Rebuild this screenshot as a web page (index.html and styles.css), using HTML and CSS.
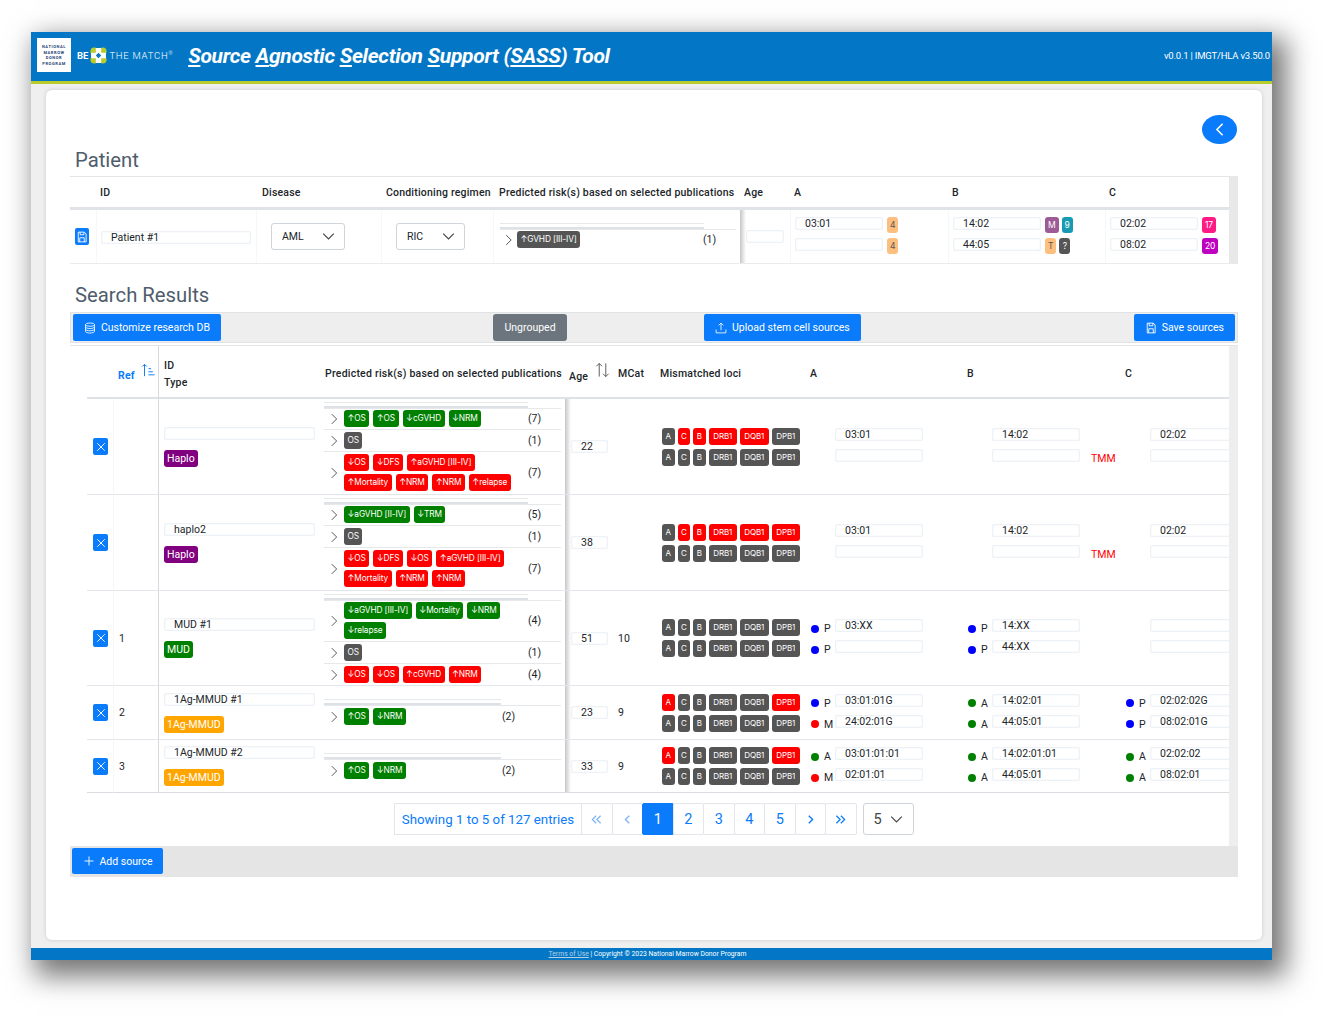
FILE: index.html
```html
<!DOCTYPE html>
<html lang="en">
<head>
    <meta charset="UTF-8">
    <title>Source Agnostic Selection Support (SASS) Tool</title>
    <link rel="stylesheet" href="styles.css">
</head>
<body>
    <svg class="icon-defs" width="0" height="0">
        <symbol id="i-chev" viewBox="0 0 16 16"><path d="M5 1.5 11.5 8 5 14.5" fill="none" stroke="currentColor" stroke-width="1.3"/></symbol>
        <symbol id="i-back" viewBox="0 0 16 16"><path d="M11 1.500 4.500 8l6.500 6.500" fill="none" stroke="currentColor" stroke-width="1.800"/></symbol>
        <symbol id="i-prev" viewBox="0 0 16 16"><path d="M10.500 2.500 5 8l5.500 5.500" fill="none" stroke="currentColor" stroke-width="2"/></symbol>
        <symbol id="i-next" viewBox="0 0 16 16"><path d="M5.500 2.500 11 8l-5.500 5.500" fill="none" stroke="currentColor" stroke-width="2"/></symbol>
        <symbol id="i-first" viewBox="0 0 16 16"><path d="M7.500 2.500 2 8l5.500 5.500M14 2.500 8.500 8l5.500 5.500" fill="none" stroke="currentColor" stroke-width="1.800"/></symbol>
        <symbol id="i-last" viewBox="0 0 16 16"><path d="M2 2.500 7.500 8 2 13.500M8.500 2.500 14 8l-5.500 5.500" fill="none" stroke="currentColor" stroke-width="1.800"/></symbol>
        <symbol id="i-down" viewBox="0 0 16 16"><path d="M1.5 4.5 8 11l6.500-6.500" fill="none" stroke="currentColor" stroke-width="1.4"/></symbol>
        <symbol id="i-x" viewBox="0 0 16 16"><path d="M3 3l10 10M13 3 3 13" fill="none" stroke="currentColor" stroke-width="1.2"/></symbol>
        <symbol id="i-save" viewBox="0 0 16 16"><path d="M3 1.500h8l2.500 2.500v10.500h-10.500zM5.500 1.500v3.500h5v-3.500M5 14.500v-5.500h6v5.500" fill="none" stroke="currentColor" stroke-width="1.200"/></symbol>
        <symbol id="i-db" viewBox="0 0 16 16"><g fill="none" stroke="currentColor" stroke-width="1.100"><ellipse cx="8" cy="3.500" rx="6" ry="2.200"/><path d="M2 3.500v9c0 1.200 2.700 2.200 6 2.200s6-1 6-2.200v-9M2 6.500c0 1.200 2.700 2.200 6 2.200s6-1 6-2.200M2 9.500c0 1.200 2.700 2.200 6 2.200s6-1 6-2.200"/></g></symbol>
        <symbol id="i-upload" viewBox="0 0 16 16"><path d="M8 11V1.500M4.800 4.500 8 1.500l3.200 3M1.500 10v4.500h13V10" fill="none" stroke="currentColor" stroke-width="1.100"/></symbol>
        <symbol id="i-plus" viewBox="0 0 16 16"><path d="M8 2v12M2 8h12" fill="none" stroke="currentColor" stroke-width="1.200"/></symbol>
    </svg>

    <div class="window">
        <header class="top-bar">
            <div class="nmdp-logo"><span>National</span><span>Marrow</span><span>Donor</span><span>Program</span></div>
            <div class="btm-logo">
                <b>BE</b>
                <svg class="btm-mark" viewBox="0 0 16 16">
                    <circle cx="4" cy="4" r="3.600" fill="#b9cc2e"/>
                    <circle cx="12" cy="4" r="3.600" fill="#b9cc2e"/>
                    <circle cx="4" cy="12" r="3.600" fill="#b9cc2e"/>
                    <circle cx="12" cy="12" r="3.600" fill="#b9cc2e"/>
                    <path d="M5.500 1h5v4.500h4.500v5h-4.500v4.500h-5v-4.500h-4.500v-5h4.500z" fill="#fff"/>
                    <path d="M8 5.500 10.500 8 8 10.500 5.500 8z" fill="#0377c6"/>
                </svg>
                <span>THE MATCH</span><sup>®</sup>
            </div>
            <h1 class="app-title"><u>S</u>ource <u>A</u>gnostic <u>S</u>election <u>S</u>upport (<u>SASS</u>) Tool</h1>
            <div class="version">v0.0.1 | IMGT/HLA v3.50.0</div>
        </header>

        <main class="page">
            <div class="card">
                <div class="back-row">
                    <button class="back-btn"><svg class="ic-back"><use href="#i-back"/></svg></button>
                </div>

                <h2 class="section-title patient-title">Patient</h2>
                <section class="patient-panel">
                    <table class="patient-table">
                        <colgroup>
                            <col class="pc-save"><col class="pc-id"><col class="pc-dis"><col class="pc-cond"><col class="pc-risk"><col class="pc-age"><col class="pc-a"><col class="pc-b"><col class="pc-c">
                        </colgroup>
                        <thead>
                            <tr>
                                <th></th>
                                <th>ID</th>
                                <th>Disease</th>
                                <th>Conditioning regimen</th>
                                <th>Predicted risk(s) based on selected publications</th>
                                <th>Age</th>
                                <th>A</th>
                                <th>B</th>
                                <th>C</th>
                            </tr>
                        </thead>
                        <tbody>
                            <tr>
                                <td><span class="save-btn"><svg class="ic-12"><use href="#i-save"/></svg></span></td>
                                <td class="td-patient-id"><div class="field field-id">Patient #1</div></td>
                                <td><div class="select select-aml">AML<svg class="ic-down"><use href="#i-down"/></svg></div></td>
                                <td><div class="select select-ric">RIC<svg class="ic-down"><use href="#i-down"/></svg></div></td>
                                <td class="risk risk-patient">
                                    <div class="risk-head"></div>
                                    <div class="risk-row">
                                        <svg class="ic-chev"><use href="#i-chev"/></svg>
                                        <div class="tags"><div class="tag-line"><span class="tag gray">↑GVHD [III-IV]</span></div></div>
                                        <span class="count">(1)</span>
                                    </div>
                                </td>
                                <td><div class="field field-age"></div></td>
                                <td class="td-typing">
                                    <div class="typing"><div class="field">03:01</div><span class="tag mini orange">4</span></div>
                                    <div class="typing"><div class="field"></div><span class="tag mini orange">4</span></div>
                                </td>
                                <td class="td-typing">
                                    <div class="typing"><div class="field">14:02</div><span class="tag mini purple">M</span><span class="tag mini teal">9</span></div>
                                    <div class="typing"><div class="field">44:05</div><span class="tag mini orange">T</span><span class="tag mini gray">?</span></div>
                                </td>
                                <td class="td-typing">
                                    <div class="typing"><div class="field">02:02</div><span class="tag mini pink">17</span></div>
                                    <div class="typing"><div class="field">08:02</div><span class="tag mini magenta">20</span></div>
                                </td>
                            </tr>
                        </tbody>
                    </table>
                </section>

                <h2 class="section-title results-title">Search Results</h2>
                <div class="toolbar">
                    <button class="btn"><svg class="ic-12"><use href="#i-db"/></svg>Customize research DB</button>
                    <button class="btn btn-muted btn-ungrouped">Ungrouped</button>
                    <button class="btn btn-upload"><svg class="ic-12"><use href="#i-upload"/></svg>Upload stem cell sources</button>
                    <button class="btn btn-save"><svg class="ic-12"><use href="#i-save"/></svg>Save sources</button>
                </div>

                <section class="results">
                    <div class="results-body">
                        <table class="results-table">
                            <colgroup>
                                <col class="c-del"><col class="c-ref"><col class="c-id"><col class="c-risk"><col class="c-age"><col class="c-mcat"><col class="c-loci"><col class="c-a"><col class="c-b"><col class="c-c">
                            </colgroup>
                            <thead>
                                <tr>
                                    <th></th>
                                    <th class="th-ref"><span class="ref-link">Ref</span>
                                        <svg class="ic-sort" viewBox="0 0 16 16"><path d="M4 15V1.500M1.500 4 4 1.500 6.500 4M8.500 6.500h3M8.500 10h5M8.500 13.500h7" fill="none" stroke="currentColor" stroke-width="1.100"/></svg>
                                    </th>
                                    <th class="th-id">ID<br>Type</th>
                                    <th class="th-risk">Predicted risk(s) based on selected publications</th>
                                    <th class="th-age"><span class="age-label">Age</span>
                                        <svg class="ic-updown" viewBox="0 0 16 16"><path d="M4.500 15V1M1.500 4l3-3 3 3M11.500 1v14M8.500 12l3 3 3-3" fill="none" stroke="currentColor" stroke-width="1"/></svg>
                                    </th>
                                    <th class="th-mcat">MCat</th>
                                    <th class="th-loci">Mismatched loci</th>
                                    <th class="th-al">A</th>
                                    <th class="th-al">B</th>
                                    <th class="th-al">C</th>
                                </tr>
                            </thead>
                            <tbody>
                                <tr class="row-96">
                                    <td class="td-del"><span class="del-btn"><svg class="ic-12"><use href="#i-x"/></svg></span></td>
                                    <td class="td-ref"></td>
                                    <td class="td-id"><div class="field field-name"></div><span class="tag type purple">Haplo</span></td>
                                    <td class="risk">
                                        <div class="risk-head"></div>
                                        <div class="risk-row">
                                            <svg class="ic-chev"><use href="#i-chev"/></svg>
                                            <div class="tags"><div class="tag-line"><span class="tag green">↑OS</span><span class="tag green">↑OS</span><span class="tag green">↓cGVHD</span><span class="tag green">↓NRM</span></div></div>
                                            <span class="count">(7)</span>
                                        </div>
                                        <div class="risk-row">
                                            <svg class="ic-chev"><use href="#i-chev"/></svg>
                                            <div class="tags"><div class="tag-line"><span class="tag gray">OS</span></div></div>
                                            <span class="count">(1)</span>
                                        </div>
                                        <div class="risk-row last">
                                            <svg class="ic-chev"><use href="#i-chev"/></svg>
                                            <div class="tags">
                                                <div class="tag-line"><span class="tag red">↓OS</span><span class="tag red">↓DFS</span><span class="tag red">↑aGVHD [III-IV]</span></div>
                                                <div class="tag-line"><span class="tag red">↑Mortality</span><span class="tag red">↑NRM</span><span class="tag red">↑NRM</span><span class="tag red">↑relapse</span></div>
                                            </div>
                                            <span class="count">(7)</span>
                                        </div>
                                    </td>
                                    <td class="td-age"><div class="field field-age">22</div></td>
                                    <td class="td-mcat"></td>
                                    <td class="td-loci">
                                        <div class="loci"><span class="tag locus gray">A</span><span class="tag locus red">C</span><span class="tag locus red">B</span><span class="tag locus wide red">DRB1</span><span class="tag locus wide red">DQB1</span><span class="tag locus wide gray">DPB1</span></div>
                                        <div class="loci"><span class="tag locus gray">A</span><span class="tag locus gray">C</span><span class="tag locus gray">B</span><span class="tag locus wide gray">DRB1</span><span class="tag locus wide gray">DQB1</span><span class="tag locus wide gray">DPB1</span></div>
                                    </td>
                                    <td class="td-al">
                                        <div class="allele"><span class="grade"></span><div class="field">03:01</div></div>
                                        <div class="allele"><span class="grade"></span><div class="field"></div></div>
                                    </td>
                                    <td class="td-al">
                                        <div class="allele"><span class="grade"></span><div class="field">14:02</div></div>
                                        <div class="allele"><span class="grade"></span><div class="field"></div><span class="tmm">TMM</span></div>
                                    </td>
                                    <td class="td-al">
                                        <div class="allele"><span class="grade"></span><div class="field">02:02</div></div>
                                        <div class="allele"><span class="grade"></span><div class="field"></div></div>
                                    </td>
                                </tr>

                                <tr class="row-96">
                                    <td class="td-del"><span class="del-btn"><svg class="ic-12"><use href="#i-x"/></svg></span></td>
                                    <td class="td-ref"></td>
                                    <td class="td-id"><div class="field field-name">haplo2</div><span class="tag type purple">Haplo</span></td>
                                    <td class="risk">
                                        <div class="risk-head"></div>
                                        <div class="risk-row">
                                            <svg class="ic-chev"><use href="#i-chev"/></svg>
                                            <div class="tags"><div class="tag-line"><span class="tag green">↓aGVHD [II-IV]</span><span class="tag green">↓TRM</span></div></div>
                                            <span class="count">(5)</span>
                                        </div>
                                        <div class="risk-row">
                                            <svg class="ic-chev"><use href="#i-chev"/></svg>
                                            <div class="tags"><div class="tag-line"><span class="tag gray">OS</span></div></div>
                                            <span class="count">(1)</span>
                                        </div>
                                        <div class="risk-row last">
                                            <svg class="ic-chev"><use href="#i-chev"/></svg>
                                            <div class="tags">
                                                <div class="tag-line"><span class="tag red">↓OS</span><span class="tag red">↓DFS</span><span class="tag red">↓OS</span><span class="tag red">↑aGVHD [III-IV]</span></div>
                                                <div class="tag-line"><span class="tag red">↑Mortality</span><span class="tag red">↑NRM</span><span class="tag red">↑NRM</span></div>
                                            </div>
                                            <span class="count">(7)</span>
                                        </div>
                                    </td>
                                    <td class="td-age"><div class="field field-age">38</div></td>
                                    <td class="td-mcat"></td>
                                    <td class="td-loci">
                                        <div class="loci"><span class="tag locus gray">A</span><span class="tag locus red">C</span><span class="tag locus red">B</span><span class="tag locus wide red">DRB1</span><span class="tag locus wide red">DQB1</span><span class="tag locus wide red">DPB1</span></div>
                                        <div class="loci"><span class="tag locus gray">A</span><span class="tag locus gray">C</span><span class="tag locus gray">B</span><span class="tag locus wide gray">DRB1</span><span class="tag locus wide gray">DQB1</span><span class="tag locus wide gray">DPB1</span></div>
                                    </td>
                                    <td class="td-al">
                                        <div class="allele"><span class="grade"></span><div class="field">03:01</div></div>
                                        <div class="allele"><span class="grade"></span><div class="field"></div></div>
                                    </td>
                                    <td class="td-al">
                                        <div class="allele"><span class="grade"></span><div class="field">14:02</div></div>
                                        <div class="allele"><span class="grade"></span><div class="field"></div><span class="tmm">TMM</span></div>
                                    </td>
                                    <td class="td-al">
                                        <div class="allele"><span class="grade"></span><div class="field">02:02</div></div>
                                        <div class="allele"><span class="grade"></span><div class="field"></div></div>
                                    </td>
                                </tr>

                                <tr class="row-95">
                                    <td class="td-del"><span class="del-btn"><svg class="ic-12"><use href="#i-x"/></svg></span></td>
                                    <td class="td-ref">1</td>
                                    <td class="td-id"><div class="field field-name">MUD #1</div><span class="tag type green">MUD</span></td>
                                    <td class="risk">
                                        <div class="risk-head"></div>
                                        <div class="risk-row">
                                            <svg class="ic-chev"><use href="#i-chev"/></svg>
                                            <div class="tags">
                                                <div class="tag-line"><span class="tag green">↓aGVHD [III-IV]</span><span class="tag green">↓Mortality</span><span class="tag green">↓NRM</span></div>
                                                <div class="tag-line"><span class="tag green">↓relapse</span></div>
                                            </div>
                                            <span class="count">(4)</span>
                                        </div>
                                        <div class="risk-row">
                                            <svg class="ic-chev"><use href="#i-chev"/></svg>
                                            <div class="tags"><div class="tag-line"><span class="tag gray">OS</span></div></div>
                                            <span class="count">(1)</span>
                                        </div>
                                        <div class="risk-row last">
                                            <svg class="ic-chev"><use href="#i-chev"/></svg>
                                            <div class="tags"><div class="tag-line"><span class="tag red">↓OS</span><span class="tag red">↓OS</span><span class="tag red">↑cGVHD</span><span class="tag red">↑NRM</span></div></div>
                                            <span class="count">(4)</span>
                                        </div>
                                    </td>
                                    <td class="td-age"><div class="field field-age">51</div></td>
                                    <td class="td-mcat">10</td>
                                    <td class="td-loci">
                                        <div class="loci"><span class="tag locus gray">A</span><span class="tag locus gray">C</span><span class="tag locus gray">B</span><span class="tag locus wide gray">DRB1</span><span class="tag locus wide gray">DQB1</span><span class="tag locus wide gray">DPB1</span></div>
                                        <div class="loci"><span class="tag locus gray">A</span><span class="tag locus gray">C</span><span class="tag locus gray">B</span><span class="tag locus wide gray">DRB1</span><span class="tag locus wide gray">DQB1</span><span class="tag locus wide gray">DPB1</span></div>
                                    </td>
                                    <td class="td-al">
                                        <div class="allele"><span class="grade"><i class="dot blue"></i>P</span><div class="field">03:XX</div></div>
                                        <div class="allele"><span class="grade"><i class="dot blue"></i>P</span><div class="field"></div></div>
                                    </td>
                                    <td class="td-al">
                                        <div class="allele"><span class="grade"><i class="dot blue"></i>P</span><div class="field">14:XX</div></div>
                                        <div class="allele"><span class="grade"><i class="dot blue"></i>P</span><div class="field">44:XX</div></div>
                                    </td>
                                    <td class="td-al">
                                        <div class="allele"><span class="grade"></span><div class="field"></div></div>
                                        <div class="allele"><span class="grade"></span><div class="field"></div></div>
                                    </td>
                                </tr>

                                <tr class="row-54">
                                    <td class="td-del"><span class="del-btn"><svg class="ic-12"><use href="#i-x"/></svg></span></td>
                                    <td class="td-ref">2</td>
                                    <td class="td-id"><div class="field field-name">1Ag-MMUD #1</div><span class="tag type orange-strong">1Ag-MMUD</span></td>
                                    <td class="risk risk-short">
                                        <div class="risk-head"></div>
                                        <div class="risk-row last">
                                            <svg class="ic-chev"><use href="#i-chev"/></svg>
                                            <div class="tags"><div class="tag-line"><span class="tag green">↑OS</span><span class="tag green">↓NRM</span></div></div>
                                            <span class="count">(2)</span>
                                        </div>
                                    </td>
                                    <td class="td-age"><div class="field field-age">23</div></td>
                                    <td class="td-mcat">9</td>
                                    <td class="td-loci">
                                        <div class="loci"><span class="tag locus red">A</span><span class="tag locus gray">C</span><span class="tag locus gray">B</span><span class="tag locus wide gray">DRB1</span><span class="tag locus wide gray">DQB1</span><span class="tag locus wide red">DPB1</span></div>
                                        <div class="loci"><span class="tag locus gray">A</span><span class="tag locus gray">C</span><span class="tag locus gray">B</span><span class="tag locus wide gray">DRB1</span><span class="tag locus wide gray">DQB1</span><span class="tag locus wide gray">DPB1</span></div>
                                    </td>
                                    <td class="td-al">
                                        <div class="allele"><span class="grade"><i class="dot blue"></i>P</span><div class="field">03:01:01G</div></div>
                                        <div class="allele"><span class="grade"><i class="dot red"></i>M</span><div class="field">24:02:01G</div></div>
                                    </td>
                                    <td class="td-al">
                                        <div class="allele"><span class="grade"><i class="dot green"></i>A</span><div class="field">14:02:01</div></div>
                                        <div class="allele"><span class="grade"><i class="dot green"></i>A</span><div class="field">44:05:01</div></div>
                                    </td>
                                    <td class="td-al">
                                        <div class="allele"><span class="grade"><i class="dot blue"></i>P</span><div class="field">02:02:02G</div></div>
                                        <div class="allele"><span class="grade"><i class="dot blue"></i>P</span><div class="field">08:02:01G</div></div>
                                    </td>
                                </tr>

                                <tr class="row-53">
                                    <td class="td-del"><span class="del-btn"><svg class="ic-12"><use href="#i-x"/></svg></span></td>
                                    <td class="td-ref">3</td>
                                    <td class="td-id"><div class="field field-name">1Ag-MMUD #2</div><span class="tag type orange-strong">1Ag-MMUD</span></td>
                                    <td class="risk risk-short">
                                        <div class="risk-head"></div>
                                        <div class="risk-row last">
                                            <svg class="ic-chev"><use href="#i-chev"/></svg>
                                            <div class="tags"><div class="tag-line"><span class="tag green">↑OS</span><span class="tag green">↓NRM</span></div></div>
                                            <span class="count">(2)</span>
                                        </div>
                                    </td>
                                    <td class="td-age"><div class="field field-age">33</div></td>
                                    <td class="td-mcat">9</td>
                                    <td class="td-loci">
                                        <div class="loci"><span class="tag locus red">A</span><span class="tag locus gray">C</span><span class="tag locus gray">B</span><span class="tag locus wide gray">DRB1</span><span class="tag locus wide gray">DQB1</span><span class="tag locus wide red">DPB1</span></div>
                                        <div class="loci"><span class="tag locus gray">A</span><span class="tag locus gray">C</span><span class="tag locus gray">B</span><span class="tag locus wide gray">DRB1</span><span class="tag locus wide gray">DQB1</span><span class="tag locus wide gray">DPB1</span></div>
                                    </td>
                                    <td class="td-al">
                                        <div class="allele"><span class="grade"><i class="dot green"></i>A</span><div class="field">03:01:01:01</div></div>
                                        <div class="allele"><span class="grade"><i class="dot red"></i>M</span><div class="field">02:01:01</div></div>
                                    </td>
                                    <td class="td-al">
                                        <div class="allele"><span class="grade"><i class="dot green"></i>A</span><div class="field">14:02:01:01</div></div>
                                        <div class="allele"><span class="grade"><i class="dot green"></i>A</span><div class="field">44:05:01</div></div>
                                    </td>
                                    <td class="td-al">
                                        <div class="allele"><span class="grade"><i class="dot green"></i>A</span><div class="field">02:02:02</div></div>
                                        <div class="allele"><span class="grade"><i class="dot green"></i>A</span><div class="field">08:02:01</div></div>
                                    </td>
                                </tr>
                            </tbody>
                        </table>

                        <div class="pager-row">
                            <div class="pager">
                                <span class="page-info">Showing 1 to 5 of 127 entries</span>
                                <a class="page-link faded"><svg class="ic-page"><use href="#i-first"/></svg></a>
                                <a class="page-link faded"><svg class="ic-page"><use href="#i-prev"/></svg></a>
                                <a class="page-link active">1</a>
                                <a class="page-link">2</a>
                                <a class="page-link">3</a>
                                <a class="page-link">4</a>
                                <a class="page-link">5</a>
                                <a class="page-link"><svg class="ic-page"><use href="#i-next"/></svg></a>
                                <a class="page-link"><svg class="ic-page"><use href="#i-last"/></svg></a>
                            </div>
                            <div class="page-size">5<svg class="ic-down"><use href="#i-down"/></svg></div>
                        </div>
                    </div>
                    <div class="results-foot">
                        <button class="btn btn-add"><svg class="ic-12"><use href="#i-plus"/></svg>Add source</button>
                    </div>
                </section>
            </div>
        </main>

        <footer class="bottom-bar"><a>Terms of Use</a> | Copyright © 2023 National Marrow Donor Program</footer>
    </div>
</body>
</html>
```

FILE: styles.css
```css
* {
    box-sizing: border-box;
}
body {
    margin: 0;
    height: 1022px;
    padding: 32px 0 0 31px;
    background-color: #fff;
    color: #212529;
    font-family: Roboto, "Liberation Sans", sans-serif;
    font-size: 10.5px;
    overflow: hidden;
}
.icon-defs {
    display: block;
    height: 0;
}
.window {
    width: 1241px;
    height: 928px;
    display: flex;
    flex-direction: column;
    box-shadow: 9px 11px 26px 5px rgba(0,0,0,0.55);
}

/* top bar */
.top-bar {
    height: 52px;
    flex: none;
    display: flex;
    align-items: center;
    padding: 0 2px 3px 6px;
    background-color: #0377c6;
    border-bottom: 3px solid #b9cc2e;
    color: #fff;
}
.nmdp-logo {
    width: 34px;
    height: 34px;
    background-color: #fff;
    color: #1c3f77;
    display: flex;
    flex-direction: column;
    align-items: center;
    justify-content: center;
    font-size: 4px;
    line-height: 5.5px;
    font-weight: 700;
    text-transform: uppercase;
    letter-spacing: 0.6px;
}
.btm-logo {
    display: flex;
    align-items: center;
    margin-left: 6px;
    font-size: 9.5px;
    letter-spacing: 0.75px;
    font-weight: 300;
}
.btm-logo b {
    font-weight: 700;
    letter-spacing: 0;
}
.btm-logo sup {
    font-size: 5px;
    margin-bottom: 5px;
}
.btm-mark {
    width: 17px;
    height: 17px;
    margin: 0 2px 0 2px;
}
.app-title {
    margin: 2px 0 0 15px;
    font-size: 21px;
    font-weight: 700;
    font-style: italic;
    letter-spacing: -0.3px;
    white-space: nowrap;
}
.version {
    margin-left: auto;
    font-size: 9.5px;
    letter-spacing: -0.2px;
}

/* page + card */
.page {
    flex: 1;
    min-height: 0;
    padding: 6px 10px 8px 15px;
    background-color: #efefef;
}
.card {
    height: 100%;
    padding: 25px 24px 0 24px;
    background-color: #fff;
    border-radius: 6px;
    box-shadow: 0 0 4px rgba(0,0,0,0.15);
}
.back-row {
    display: flex;
    justify-content: flex-end;
    padding-right: 1px;
}
.back-btn {
    width: 35px;
    height: 29px;
    padding: 0;
    border: none;
    border-radius: 50%;
    background-color: #0a7bfb;
    color: #fff;
    display: flex;
    align-items: center;
    justify-content: center;
}
.ic-back {
    width: 14px;
    height: 15px;
}
.section-title {
    margin: 0;
    padding-left: 5px;
    font-size: 20.3px;
    line-height: 24px;
    font-weight: 400;
    color: #4f5d6b;
}
.patient-title {
    margin-top: 4px;
    margin-bottom: 4px;
}
.results-title {
    margin-top: 19px;
    margin-bottom: 5px;
}
.card svg.ic-12 {
    width: 12px;
    height: 12px;
    flex: none;
}

/* shared cell bits */
.field {
    width: 88px;
    height: 13px;
    flex: none;
    padding-left: 10px;
    border-radius: 2px;
    background-color: #fff;
    box-shadow: inset 0 0 2px 1px #e8eef5;
    font-size: 10.500px;
    line-height: 13px;
    white-space: nowrap;
}
.tag {
    display: inline-block;
    height: 17px;
    padding: 0 3.5px;
    border-radius: 3px;
    color: #fff;
    font-family: Inter, Roboto, sans-serif;
    font-size: 8.300px;
    letter-spacing: -0.1px;
    line-height: 17px;
    white-space: nowrap;
}
.tag.green { background-color: #008000; }
.tag.red { background-color: #f00; }
.tag.gray { background-color: #555; }
.tag.purple { background-color: #800080; }
.tag.orange-strong { background-color: #ffa500; }
.tag.orange { background-color: #fdbf7f; color: #555; }
.tag.teal { background-color: #179ab3; }
.tag.pink { background-color: #ff1a86; }
.tag.magenta { background-color: #c000c0; }
.tag.mini {
    height: 16px;
    min-width: 11px;
    padding: 0 3px;
    line-height: 16px;
    text-align: center;
    font-size: 8.500px;
}
.tag.mini.purple {
    background-color: #9c5a96;
}
.risk {
    position: relative;
    vertical-align: top;
    padding: 0 4px 0 1px;
}
.risk::after {
    content: "";
    position: absolute;
    top: 0;
    bottom: 0;
    left: 100%;
    width: 6px;
    background: linear-gradient(to right, #c6c6c6, rgba(255,255,255,0));
}
.risk-head {
    width: 204px;
    height: 6px;
    margin-top: 3px;
    border-top: 1px solid #e6e9ec;
    border-bottom: 2px solid #dee2e6;
}
.risk-row {
    display: flex;
    align-items: center;
    padding: 2px 0;
    border-top: 1px solid #e6e9ec;
}
.risk-head + .risk-row {
    padding-top: 1px;
}
.risk-row .count {
    font-size: 10.500px;
}
.tags {
    width: 184px;
    flex: none;
    display: flex;
    flex-direction: column;
    gap: 3px;
}
.tag-line {
    display: flex;
    gap: 4px;
}
.ic-chev {
    width: 20px;
    height: 12px;
    flex: none;
    color: #555;
}
.ic-down {
    width: 13px;
    height: 13px;
    color: #444;
}

/* patient panel */
.patient-panel {
    border-top: 1px solid #e3e6e9;
    border-bottom: 1px solid #e9ecef;
    border-right: 9px solid #e8e8e8;
}
.patient-table, .results-table {
    border-collapse: separate;
    border-spacing: 0;
    table-layout: fixed;
}
.patient-table {
    width: 1159px;
}
.pc-save { width: 26px; }
.pc-id { width: 160px; }
.pc-dis { width: 125px; }
.pc-cond { width: 112px; }
.pc-risk { width: 247px; }
.pc-age { width: 50px; }
.pc-a { width: 158px; }
.pc-b { width: 157px; }
.pc-c { width: 124px; }
.patient-table th {
    height: 33px;
    padding: 0 0 0 4px;
    border-bottom: 3px solid #e0e4e8;
    text-align: left;
    font-weight: 500;
    letter-spacing: 0.2px;
    white-space: nowrap;
}
.patient-table th:nth-child(2) { padding-left: 4px; }
.patient-table th:nth-child(3) { padding-left: 6px; }
.patient-table th:nth-child(4) { padding-left: 5px; }
.patient-table th:nth-child(5) { padding-left: 6px; }
.patient-table td {
    height: 53px;
    padding: 0 0 0 5px;
    border-left: 1px solid #f6f7f8;
}
.patient-table td:first-child {
    border-left: none;
}
.patient-table td.risk {
    padding: 0 4px 0 6px;
}
.patient-table td.td-typing {
    padding: 2px 0 0 4px;
}
.patient-table td.td-patient-id {
    padding: 1px 0 0 4px;
}
.save-btn {
    width: 14px;
    height: 17px;
    display: flex;
    align-items: center;
    justify-content: center;
    border-radius: 2px;
    background-color: #0a7bfb;
    color: #fff;
}
.field-id {
    width: 150px;
}
.select {
    height: 27px;
    display: flex;
    align-items: center;
    justify-content: space-between;
    padding: 0 9px 0 10px;
    border: 1px solid #ced4da;
    border-radius: 3px;
    font-size: 10.500px;
}
.select-aml {
    width: 74px;
    margin-left: 9px;
}
.select-ric {
    width: 69px;
    margin-left: 9px;
}
.risk-patient .risk-head {
    margin-top: 13px;
}
.risk-patient .ic-chev {
    width: 17px;
}
.risk-patient .tags {
    width: 186px;
}
.field-age {
    width: 37px;
}
.patient-table .field-age {
    width: 38px;
    margin-left: 0;
}
.typing {
    height: 21px;
    display: flex;
    gap: 4px;
}
.typing .tag + .tag {
    margin-left: -1px;
}

/* toolbar */
.toolbar {
    height: 31px;
    display: flex;
    align-items: center;
    padding-left: 2px;
    margin-bottom: 2px;
    background-color: #eee;
    border: 1px solid #e0e3e6;
}
.btn {
    height: 27px;
    display: inline-flex;
    align-items: center;
    gap: 5px;
    padding: 0 11px;
    border: none;
    border-radius: 2px;
    background-color: #0a7bfb;
    color: #fff;
    font-family: Roboto, "Liberation Sans", sans-serif;
    font-size: 10.500px;
    white-space: nowrap;
}
.btn-muted {
    background-color: #6c757d;
    border-radius: 3px;
}
.btn-ungrouped {
    margin-left: 272px;
    padding: 0 11.5px;
}
.btn-upload {
    margin-left: 137px;
}
.btn-save {
    margin-left: 273px;
}

/* results */
.results {
    border-top: 1px solid #e3e6e9;
}
.results-body {
    padding-left: 17px;
    border-right: 9px solid #eee;
}
.results-table {
    width: 1142px;
}
.c-del { width: 26px; }
.c-ref { width: 45px; }
.c-id { width: 165px; }
.c-risk { width: 242px; }
.c-age { width: 47px; }
.c-mcat { width: 40px; }
.c-loci { width: 150px; }
.c-a { width: 157px; }
.c-b { width: 158px; }
.c-c { width: 112px; }
.results-table th {
    height: 53px;
    padding: 3px 0 0 0;
    border-bottom: 2px solid #dee2e6;
    text-align: left;
    font-weight: 500;
    letter-spacing: 0.23px;
    line-height: 17px;
    white-space: nowrap;
}
.results-table th.th-ref {
    padding-left: 5px;
}
.results-table th.th-id {
    padding: 5px 0 0 5px;
    border-left: 1px solid #d5d9dd;
}
.results-table th.th-risk { padding-left: 2px; }
.results-table th.th-age { padding-left: 4px; }
.results-table th.th-mcat { padding-left: 6px; }
.results-table th.th-loci { padding-left: 8px; }
.results-table th.th-al { padding-left: 8px; }
.ref-link {
    color: #0a7bfb;
    font-weight: 700;
    vertical-align: -2px;
}
.ic-sort {
    width: 14px;
    height: 14px;
    margin-left: 3px;
    color: #0a7bfb;
    vertical-align: 0;
}
.age-label {
    vertical-align: -2px;
}
.ic-updown {
    width: 15px;
    height: 16px;
    margin-left: 4px;
    color: #555;
    vertical-align: 0;
}
.results-table td {
    padding: 0;
    border-bottom: 1px solid #e3e6ea;
    overflow: hidden;
}
.results-table td.risk {
    overflow: visible;
    padding: 0 4px 0 1px;
}
.results-table tbody tr:last-child td {
    border-bottom-color: #d9dde2;
}
.row-96 td { height: 96px; }
.row-95 td { height: 95px; }
.row-54 td { height: 54px; }
.row-53 td { height: 53px; }
.results-table td.td-del {
    padding: 0 0 0 6px;
}
.del-btn {
    width: 15px;
    height: 17px;
    display: flex;
    align-items: center;
    justify-content: center;
    border-radius: 2px;
    background-color: #0a7bfb;
    color: #fff;
}
.results-table td.td-ref {
    padding: 0 0 0 5px;
    border-left: 1px solid #f5f7f9;
}
.results-table td.td-id {
    padding: 0 0 0 5px;
    border-left: 1px solid #d5d9dd;
}
.field-name {
    width: 151px;
    margin-bottom: 10px;
}
.tag.type {
    display: block;
    width: fit-content;
    padding: 0 3px;
    font-family: Roboto, sans-serif;
    font-size: 10.500px;
    letter-spacing: 0;
}
.risk-short .risk-head {
    width: 177px;
    margin-top: 13px;
}
.risk-short .risk-head + .risk-row {
    padding-top: 2px;
}
.risk-short .tags {
    width: 158px;
}
.results-table td.td-age,
.results-table td.td-mcat {
    padding: 0 0 0 6px;
}
.results-table td.td-loci {
    padding: 2px 0 0 10px;
}
.loci {
    display: flex;
    gap: 3px;
    margin: 2px 0 4px;
}
.tag.locus {
    width: 12.500px;
    padding: 0;
    text-align: center;
    font-size: 8px;
}
.tag.locus.wide {
    width: 28.500px;
}
.results-table td.td-al {
    padding-top: 4px;
}
.allele {
    height: 21px;
    display: flex;
    align-items: flex-start;
}
.grade {
    width: 33px;
    height: 19px;
    flex: none;
    padding-left: 9px;
    display: flex;
    align-items: center;
    gap: 5px;
    font-size: 10.500px;
}
.dot {
    width: 8px;
    height: 8px;
    flex: none;
    border-radius: 50%;
}
.dot.blue { background-color: #00f; }
.dot.red { background-color: #f00; }
.dot.green { background-color: #008000; }
.tmm {
    margin: 3px 0 0 11px;
    color: #f00;
    font-size: 10.500px;
}

/* pagination */
.pager-row {
    display: flex;
    gap: 6px;
    padding: 10px 0 11px 307px;
}
.pager {
    height: 32px;
    display: flex;
}
.page-info, .page-link {
    display: flex;
    align-items: center;
    justify-content: center;
    border: 1px solid #e3e6ea;
    margin-left: -1px;
    color: #0a7bfb;
    font-size: 14.500px;
}
.page-info {
    width: 188px;
    margin-left: 0;
    font-size: 13.300px;
    white-space: nowrap;
}
.page-link {
    width: 31.500px;
    border-radius: 2px;
}
.page-link.faded {
    color: #7fb4f5;
}
.page-link.active {
    background-color: #0a7bfb;
    border-color: #0a7bfb;
    color: #fff;
}
.ic-page {
    width: 11px;
    height: 11px;
}
.page-size {
    width: 51px;
    height: 32px;
    display: flex;
    align-items: center;
    justify-content: space-between;
    padding: 0 10px;
    border: 1px solid #ced4da;
    border-radius: 3px;
    font-size: 14.500px;
    color: #444;
}

.results-foot {
    height: 31px;
    padding: 2px;
    background-color: #e5e5e5;
}
.btn-add {
    height: 26px;
    padding: 0 10.500px;
}
.bottom-bar {
    height: 12px;
    flex: none;
    background-color: #0377c6;
    color: #fff;
    font-size: 6.800px;
    line-height: 12px;
    text-align: center;
    padding-right: 8px;
}
.bottom-bar a {
    color: #b6cfe2;
    text-decoration: underline;
}
```
